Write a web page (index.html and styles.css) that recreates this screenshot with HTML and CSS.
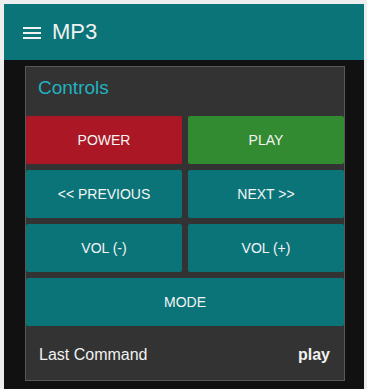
FILE: index.html
```html
<!DOCTYPE html>
<html lang="en">
<head>
    <meta charset="UTF-8">
    <meta name="viewport" content="width=device-width, initial-scale=1.0">
    <title>MP3</title>
    <link rel="stylesheet" href="styles.css">
</head>
<body>
    <div class="app">
        <header>
            <svg class="menu" width="18" height="14" viewBox="0 0 18 14">
                <rect x="0" y="1" width="18" height="2" fill="#f1f1f1"/>
                <rect x="0" y="6" width="18" height="2" fill="#f1f1f1"/>
                <rect x="0" y="11" width="18" height="2" fill="#f1f1f1"/>
            </svg>
            <span class="title">MP3</span>
        </header>

        <main>
            <div class="card">
                <h3>Controls</h3>
                <div class="controls">
                    <button class="btn red">POWER</button>
                    <button class="btn green">PLAY</button>
                    <button class="btn">&lt;&lt; PREVIOUS</button>
                    <button class="btn">NEXT &gt;&gt;</button>
                    <button class="btn">VOL (-)</button>
                    <button class="btn">VOL (+)</button>
                    <button class="btn wide">MODE</button>
                </div>
                <div class="status">
                    <span>Last Command</span>
                    <span class="value">play</span>
                </div>
            </div>
        </main>
    </div>
</body>
</html>
```

FILE: styles.css
```css
body {
    font-family: 'Liberation Sans', Arial, sans-serif;
    background-color: #eeeeee;
    margin: 0;
    padding: 4px 3px 0 4px;
}
.app {
    background-color: #111111;
    min-height: calc(100vh - 4px);
}
header {
    background-color: #0b7479;
    color: #f1f1f1;
    height: 56px;
    display: flex;
    align-items: center;
    padding: 0 19px;
}
.menu {
    margin-right: 11px;
    margin-top: 1px;
}
.title {
    font-size: 22px;
}
main {
    padding: 6px 0 0;
}
.card {
    width: 320px;
    box-sizing: border-box;
    margin-left: 21px;
    background-color: #333333;
    border: 1px solid #585858;
}
.card h3 {
    margin: 0;
    height: 49px;
    box-sizing: border-box;
    padding: 10px 0 0 12px;
    font-size: 19px;
    font-weight: normal;
    color: #20b2c2;
}
.controls {
    display: grid;
    grid-template-columns: 1fr 1fr;
    gap: 6px;
}
.btn {
    font-family: inherit;
    background-color: #0b7479;
    color: #f4f4f4;
    height: 48px;
    font-size: 14px;
    border: none;
    border-radius: 2px;
    padding: 0;
    cursor: pointer;
}
.btn.red {
    background-color: #ab1725;
}
.btn.green {
    background-color: #328a31;
}
.btn.wide {
    grid-column: span 2;
}
.status {
    display: flex;
    justify-content: space-between;
    align-items: center;
    height: 54px;
    padding: 4px 14px 0 13px;
    box-sizing: border-box;
    color: #f1f1f1;
    font-size: 16px;
}
.status .value {
    font-weight: bold;
}
```
